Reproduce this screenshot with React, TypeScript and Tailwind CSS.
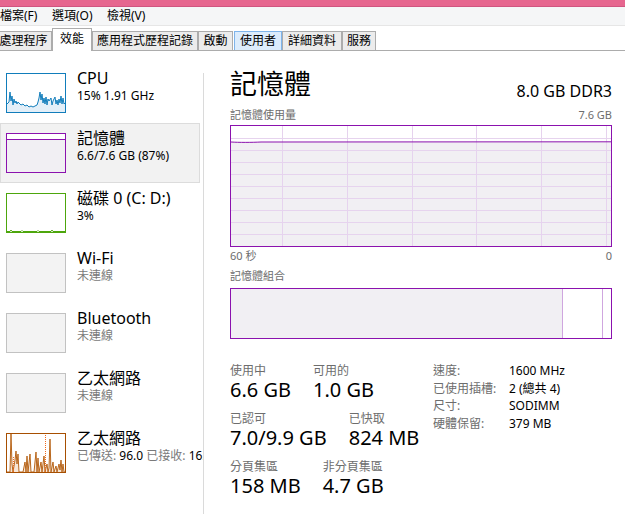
import React from 'react';

const tabs = [
  { label: '處理程序', w: 'w-[57px] -ml-[5px]', state: 'normal' },
  { label: '效能', w: 'w-[40px]', state: 'active' },
  { label: '應用程式歷程記錄', w: 'w-[106px]', state: 'normal' },
  { label: '啟動', w: 'w-[35px]', state: 'normal' },
  { label: '使用者', w: 'w-[48px] ml-[1px]', state: 'hover' },
  { label: '詳細資料', w: 'w-[60px]', state: 'normal' },
  { label: '服務', w: 'w-[34px]', state: 'normal' },
];

function CpuThumb() {
  const pts =
    '0,30 2,28 3,18 4,27 5,22 6,31 7,25 8,29 9,27 10,30 11,28 12,29 14,31 16,30 18,32 20,31 22,33 24,32 26,33 28,32 30,31 31,28 32,24 33,18 34,26 35,20 36,29 37,24 38,30 39,23 40,31 41,25 42,27 44,24 45,31 46,27 48,23 49,30 50,26 51,31 52,25 53,29 54,22 55,30 56,24 57,30 58,29';
  return (
    <div className="w-[60px] h-[40px] border border-[#117dbb] bg-white">
      <svg viewBox="0 0 58 38" preserveAspectRatio="none" className="block w-full h-full">
        <polygon points={`0,38 ${pts} 58,38`} fill="#e3eff8" />
        <polyline points={pts} fill="none" stroke="#117dbb" strokeWidth="1" />
      </svg>
    </div>
  );
}

function MemThumb() {
  return (
    <div className="w-[60px] h-[40px] border border-[#8b12ae] bg-[#f1eff3] flex flex-col">
      <div className="h-[5px] bg-white border-b border-[#8b12ae] box-content"></div>
    </div>
  );
}

function DiskThumb() {
  return (
    <div className="w-[60px] h-[40px] border border-[#4da60c] bg-white">
      <svg viewBox="0 0 58 38" preserveAspectRatio="none" className="block w-full h-full">
        <polyline
          points="0,37.5 3,37.5 4,36 5,37.5 14,37.5 15,36.5 16,37.5 30,37.5 31,36.5 32,37.5 44,37.5 45,36 46,37.5 58,37.5"
          fill="none"
          stroke="#4da60c"
          strokeWidth="1"
        />
      </svg>
    </div>
  );
}

function OffThumb() {
  return <div className="w-[60px] h-[40px] border border-[#c2c2c2] bg-[#f3f3f3]"></div>;
}

function EthThumb() {
  const pts =
    '0,38 3,38 4,0 5,30 6,38 8,26 9,17 10,30 11,20 12,38 16,38 18,28 19,38 20,22 21,38 23,20 24,38 27,38 29,18 30,38 31,24 32,38 34,28 35,38 37,22 38,38 40,30 41,38 42,34 43,5 44,38 46,28 47,38 49,32 50,38 52,30 53,36 54,26 55,38 56,30 57,38 58,38';
  return (
    <div className="w-[60px] h-[40px] border border-[#a74f01] bg-white">
      <svg viewBox="0 0 58 38" preserveAspectRatio="none" className="block w-full h-full">
        <polygon points={pts} fill="#f7e6d6" />
        <polyline points={pts} fill="none" stroke="#b8661c" strokeWidth="1" />
        <line x1="6.5" y1="38" x2="6.5" y2="22" stroke="#f26b1d" strokeWidth="1" strokeDasharray="1 1" />
        <line x1="38.5" y1="38" x2="38.5" y2="0" stroke="#f26b1d" strokeWidth="1" strokeDasharray="1 1" />
      </svg>
    </div>
  );
}

function SideItem({
  thumb,
  title,
  sub,
  selected,
}: {
  thumb: React.ReactNode;
  title: string;
  sub: React.ReactNode;
  selected?: boolean;
}) {
  return (
    <div
      className={
        selected
          ? 'h-[60px] w-[200px] shrink-0 flex items-start bg-[#f2f2f2] border border-[#dcdcdc]'
          : 'h-[60px] w-[200px] shrink-0 flex items-start border border-transparent'
      }
    >
      <div className="ml-[5px] mt-[9px] shrink-0">{thumb}</div>
      <div className="ml-[11px] pt-[4px] whitespace-nowrap">
        <div className="text-[16px] leading-[20px] text-black">{title}</div>
        <div className="text-[12px] leading-[16px]">{sub}</div>
      </div>
    </div>
  );
}

function UsageGraph() {
  const hLines = [12, 24, 36, 48, 60, 72, 84, 96, 108];
  const vLines = [51, 116, 181, 245, 310, 375];
  return (
    <div className="h-[122px] border border-[#8b12ae] bg-white">
      <svg viewBox="0 0 380 120" preserveAspectRatio="none" className="block w-full h-full">
        <path d="M0 16 C8 16.5 20 16.5 30 16 L380 15.8 L380 120 L0 120 Z" fill="#f1eff3" />
        {hLines.map((y) => (
          <line key={y} x1="0" x2="380" y1={y + 0.5} y2={y + 0.5} stroke="#e6d3ee" strokeWidth="1" />
        ))}
        {vLines.map((x) => (
          <line key={x} x1={x + 0.5} x2={x + 0.5} y1="0" y2="120" stroke="#e6d3ee" strokeWidth="1" />
        ))}
        <path d="M0 16 C8 16.5 20 16.5 30 16 L380 15.8" fill="none" stroke="#8b12ae" strokeWidth="1" />
      </svg>
    </div>
  );
}

function Stat({ label, value }: { label: string; value: string }) {
  return (
    <div className="whitespace-nowrap">
      <div className="text-[12px] leading-[14px] text-[#6d6d6d]">{label}</div>
      <div className="text-[20px] leading-[24px] text-black">{value}</div>
    </div>
  );
}

export default function App() {
  return (
    <div className="w-[625px] h-[523px] overflow-hidden bg-white font-['Noto_Sans','Noto_Sans_CJK_TC',sans-serif] text-black">
      {/* title bar strip */}
      <div className="h-[7px] bg-[#e6668f] border-b border-[#cf5580]"></div>

      {/* menu bar */}
      <div className="h-[19px] bg-[#f5f6f7] border-b border-[#e6e6e6] flex items-center text-[12px] leading-[16px]">
        <span className="w-[52px]">檔案(F)</span>
        <span className="w-[55px]">選項(O)</span>
        <span>檢視(V)</span>
      </div>

      {/* tabs */}
      <div className="h-[25px] border-b border-[#acacac] flex items-end text-[12px]">
        {tabs.map((t) => (
          <div
            key={t.label}
            className={
              t.state === 'active'
                ? `${t.w} h-[23px] -mb-px bg-white border-t border-x border-[#acacac] flex justify-center pt-[2px] leading-[16px]`
                : t.state === 'hover'
                  ? `${t.w} h-[19px] bg-[#dcecfc] border-t border-x border-[#7eb4ea] flex justify-center pt-[1px] leading-[16px]`
                  : `${t.w} h-[19px] bg-[#ececec] border-t border-x border-[#acacac] flex justify-center pt-[1px] leading-[16px]`
            }
          >
            {t.label}
          </div>
        ))}
      </div>

      {/* main */}
      <div className="flex items-start">
        {/* sidebar */}
        <div className="w-[203px] h-[471px] overflow-hidden pt-[12px] flex flex-col">
          <SideItem thumb={<CpuThumb />} title="CPU" sub="15% 1.91 GHz" />
          <SideItem thumb={<MemThumb />} title="記憶體" sub="6.6/7.6 GB (87%)" selected />
          <SideItem thumb={<DiskThumb />} title="磁碟 0 (C: D:)" sub="3%" />
          <SideItem thumb={<OffThumb />} title="Wi-Fi" sub={<span className="text-[#7a7a7a]">未連線</span>} />
          <SideItem thumb={<OffThumb />} title="Bluetooth" sub={<span className="text-[#7a7a7a]">未連線</span>} />
          <SideItem thumb={<OffThumb />} title="乙太網路" sub={<span className="text-[#7a7a7a]">未連線</span>} />
          <SideItem
            thumb={<EthThumb />}
            title="乙太網路"
            sub={
              <span>
                <span className="text-[#7a7a7a]">已傳送: </span>96.0 <span className="text-[#7a7a7a]">已接收: </span>16.0 Kbps
              </span>
            }
          />
        </div>

        {/* separator */}
        <div className="w-px h-[441px] mt-[22px] bg-[#dadada]"></div>

        {/* detail panel */}
        <div className="w-[382px] ml-[26px] pt-[16px]">
          <div className="flex justify-between items-end h-[34px]">
            <div className="text-[27px] leading-[34px]">記憶體</div>
            <div className="text-[16px] leading-[20px]">8.0 GB DDR3</div>
          </div>

          <div className="mt-[7px] flex justify-between text-[11px] leading-[14px] text-[#6d6d6d]">
            <span>記憶體使用量</span>
            <span>7.6 GB</span>
          </div>
          <div className="mt-[3px]">
            <UsageGraph />
          </div>
          <div className="mt-[2px] flex justify-between text-[11px] leading-[14px] text-[#6d6d6d]">
            <span>60 秒</span>
            <span>0</span>
          </div>

          <div className="mt-[6px] text-[11px] leading-[14px] text-[#6d6d6d]">記憶體組合</div>
          <div className="mt-[5px] h-[51px] border border-[#8b12ae] flex">
            <div className="w-[331px] bg-[#f1eff3]"></div>
            <div className="w-px bg-[#cfa6df]"></div>
            <div className="w-[39px] bg-white"></div>
            <div className="w-px bg-[#cfa6df]"></div>
            <div className="flex-1 bg-white"></div>
          </div>

          {/* stats */}
          <div className="mt-[23px] flex items-start">
            <div className="w-[203px] pt-[2px] flex flex-col gap-[10px]">
              <div className="flex gap-[22px]">
                <Stat label="使用中" value="6.6 GB" />
                <Stat label="可用的" value="1.0 GB" />
              </div>
              <div className="flex gap-[22px]">
                <Stat label="已認可" value="7.0/9.9 GB" />
                <Stat label="已快取" value="824 MB" />
              </div>
              <div className="flex gap-[22px]">
                <Stat label="分頁集區" value="158 MB" />
                <Stat label="非分頁集區" value="4.7 GB" />
              </div>
            </div>
            <div className="grid grid-cols-[76px_auto] content-start text-[12px] leading-[17.7px] whitespace-nowrap">
              <span className="text-[#6d6d6d]">速度:</span>
              <span>1600 MHz</span>
              <span className="text-[#6d6d6d]">已使用插槽:</span>
              <span>2 (總共 4)</span>
              <span className="text-[#6d6d6d]">尺寸:</span>
              <span>SODIMM</span>
              <span className="text-[#6d6d6d]">硬體保留:</span>
              <span>379 MB</span>
            </div>
          </div>
        </div>
      </div>
    </div>
  );
}
